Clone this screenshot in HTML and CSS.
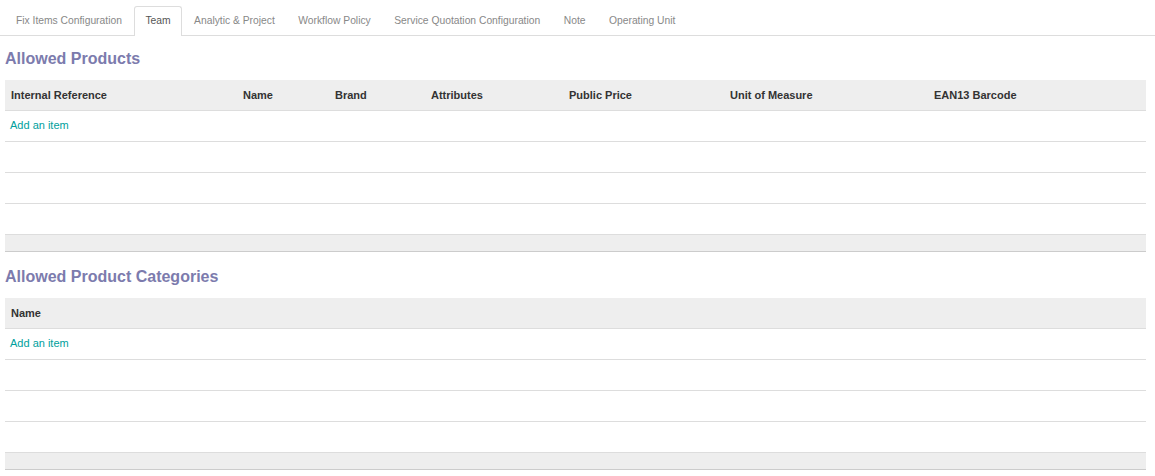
FILE: index.html
```html
<!DOCTYPE html>
<html>
<head>
<meta charset="utf-8">
<link rel="stylesheet" href="styles.css">
</head>
<body>
<div class="tabs">
  <ul class="nav">
    <li class="tab">Fix Items Configuration</li>
    <li class="tab active">Team</li>
    <li class="tab">Analytic &amp; Project</li>
    <li class="tab">Workflow Policy</li>
    <li class="tab">Service Quotation Configuration</li>
    <li class="tab">Note</li>
    <li class="tab">Operating Unit</li>
  </ul>
</div>
<div class="content">
  <h2 class="sep">Allowed Products</h2>
  <table class="list">
    <colgroup>
      <col style="width:232px"><col style="width:92px"><col style="width:96px"><col style="width:138px"><col style="width:161px"><col style="width:204px"><col>
    </colgroup>
    <thead>
      <tr><th>Internal Reference</th><th>Name</th><th>Brand</th><th>Attributes</th><th>Public Price</th><th>Unit of Measure</th><th>EAN13 Barcode</th></tr>
    </thead>
    <tbody>
      <tr><td colspan="7" class="add"><a>Add an item</a></td></tr>
      <tr><td colspan="7"></td></tr>
      <tr><td colspan="7"></td></tr>
      <tr><td colspan="7"></td></tr>
    </tbody>
    <tfoot><tr><td colspan="7"></td></tr></tfoot>
  </table>
  <h2 class="sep second">Allowed Product Categories</h2>
  <table class="list">
    <thead><tr><th>Name</th></tr></thead>
    <tbody>
      <tr><td class="add"><a>Add an item</a></td></tr>
      <tr><td></td></tr>
      <tr><td></td></tr>
      <tr><td></td></tr>
    </tbody>
    <tfoot><tr><td></td></tr></tfoot>
  </table>
</div>
</body>
</html>
```
FILE: styles.css
```css
html, body { margin: 0; padding: 0; background: #fff; }
body { font-family: "Liberation Sans", Arial, sans-serif; font-size: 12px; color: #4c4c4c; }
.tabs { padding-top: 6px; border-bottom: 1px solid #ddd; }
.nav { list-style: none; margin: 0 0 -1px 0; padding: 0 0 0 5px; display: flex; }
.tab { height: 28px; line-height: 27px; padding: 0 10px; margin-right: 1.5px; color: #888; border: 1px solid transparent; border-bottom: none; border-radius: 3px 3px 0 0; font-size: 10.3px; }
.tab.active { color: #555; background: #fff; border-color: #ddd; height: 29px; }
.content { padding: 0 9px 0 5px; }
.sep { margin: 0; font-size: 16px; font-weight: bold; color: #7c7bad; height: 44px; line-height: 45px; }
.sep.second { height: 46px; line-height: 49px; }
.list { width: 100%; border-collapse: collapse; table-layout: fixed; }
.list th { background: #eee; height: 30px; padding: 0 6px; text-align: left; font-size: 11px; font-weight: bold; color: #333; border-bottom: 1px solid #ddd; white-space: nowrap; }
.list tbody td { height: 30px; padding: 0 5px; border-bottom: 1px solid #ddd; }
.list tbody td.add { padding-top: 0; vertical-align: top; line-height: 29px; }
.add a { color: #00a09d; font-size: 11px; }
.list tfoot td { height: 16px; background: #eee; border-top: 1px solid #ccc; border-bottom: 1px solid #ccc; padding: 0; }
```
